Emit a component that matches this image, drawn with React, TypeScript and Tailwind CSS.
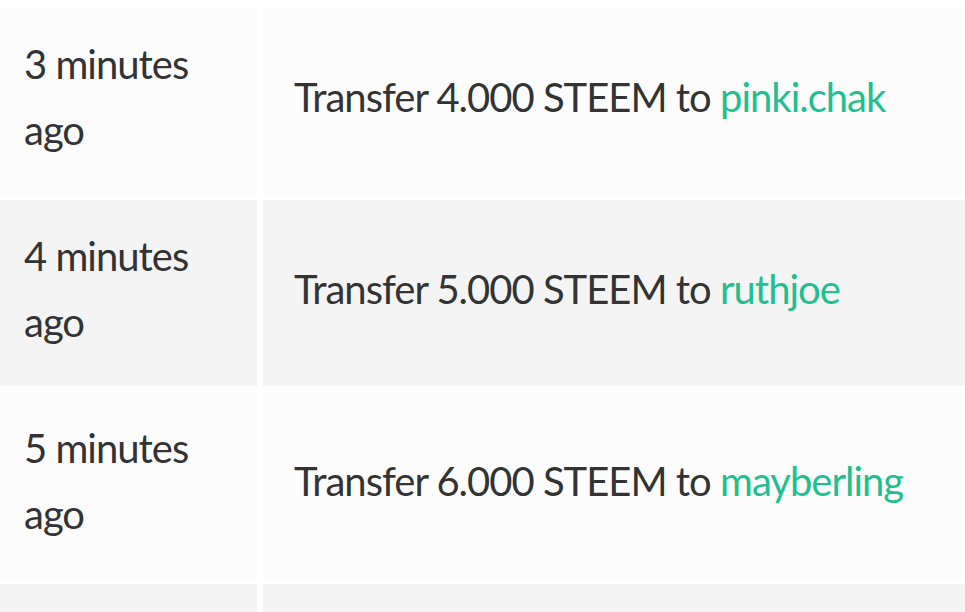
import React from "react";

const rows = [
  { time: "3 minutes ago", amount: "4.000", to: "pinki.chak", bg: "bg-[#fcfcfc]" },
  { time: "4 minutes ago", amount: "5.000", to: "ruthjoe", bg: "bg-[#f4f4f4]" },
  { time: "5 minutes ago", amount: "6.000", to: "mayberling", bg: "bg-[#fcfcfc]" },
];

export default function App() {
  return (
    <div
      className="w-[965px] h-[612px] overflow-hidden bg-white pt-[8px] flex flex-col gap-[6px] text-[#333333]"
      style={{ fontFamily: "Lato, 'Noto Sans', sans-serif" }}
    >
      {rows.map((r, i) => (
        <div key={i} className="flex gap-[6px] h-[186px] shrink-0">
          <div className={`w-[257px] shrink-0 ${r.bg} pl-[24px] pr-[24px] pb-[8px] flex items-center`}>
            <div className="text-[40px] leading-[66px] tracking-[-1px]">{r.time}</div>
          </div>
          <div className={`flex-1 ${r.bg} pl-[31px] pb-[8px] flex items-center`}>
            <div className="text-[40px] leading-[66px] tracking-[-1px]">
              Transfer {r.amount} STEEM to{" "}
              <span className="text-[#1fbf8f]">{r.to}</span>
            </div>
          </div>
        </div>
      ))}
      <div className="flex gap-[6px] h-[186px] shrink-0">
        <div className="w-[257px] shrink-0 bg-[#f4f4f4]" />
        <div className="flex-1 bg-[#f4f4f4]" />
      </div>
    </div>
  );
}
